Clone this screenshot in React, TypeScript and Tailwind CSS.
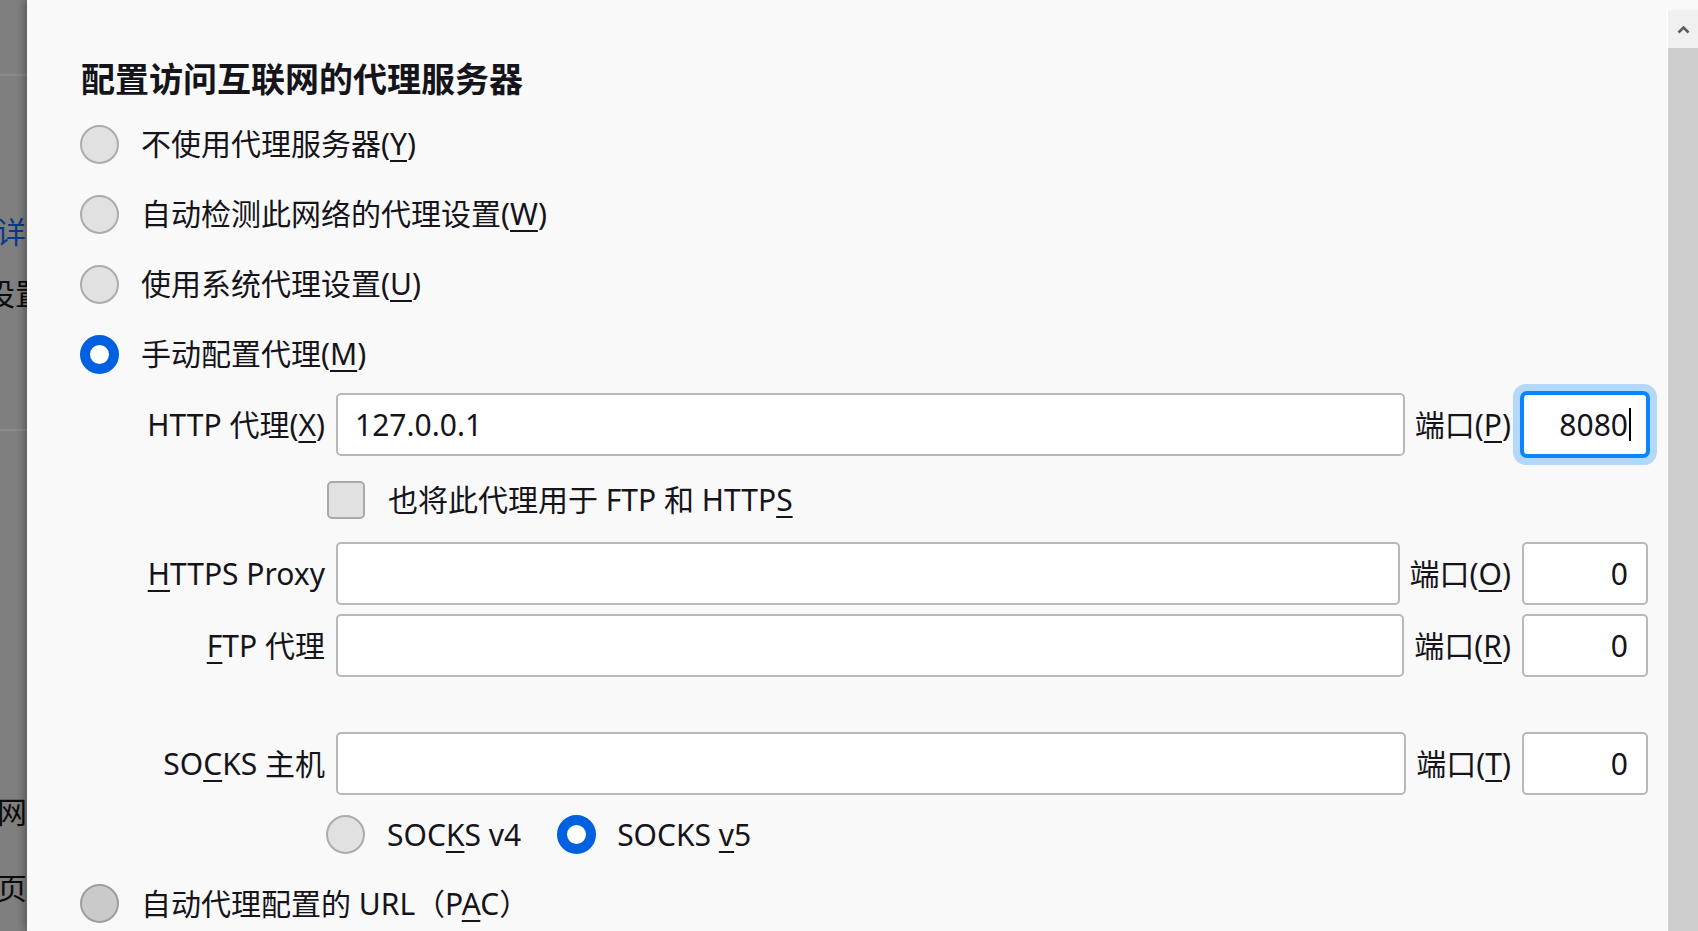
import React from "react";

function U({ children }: { children: React.ReactNode }) {
  return <span className="underline decoration-2 underline-offset-[5px]">{children}</span>;
}

function Radio({ checked = false, dark = false }: { checked?: boolean; dark?: boolean }) {
  if (checked) {
    return <span className="box-border block w-[39px] h-[39px] shrink-0 rounded-full border-[10px] border-[#0061e0] bg-white" />;
  }
  if (dark) {
    return <span className="box-border block w-[39px] h-[39px] shrink-0 rounded-full border-2 border-[#9e9e9e] bg-[#cacaca]" />;
  }
  return <span className="box-border block w-[39px] h-[39px] shrink-0 rounded-full border-2 border-[#acacac] bg-[#e1e1e1]" />;
}

function RadioRow({ checked = false, children }: { checked?: boolean; children: React.ReactNode }) {
  return (
    <div className="flex items-center h-[70px]">
      <Radio checked={checked} />
      <span className="ml-[22px] leading-none">{children}</span>
    </div>
  );
}

function PortBox({ value, focused = false }: { value: string; focused?: boolean }) {
  if (focused) {
    return (
      <div className="ml-[11px] box-border w-[126px] h-[63px] shrink-0 rounded-[5px] border-2 border-[#0b84ff] bg-white shadow-[0_0_0_2px_#0b84ff,0_0_0_9px_#b4d7fc] flex items-center justify-end pr-[18px]">
        <span className="leading-none">{value}</span>
        <span className="block w-[2px] h-[33px] bg-black ml-[1px] -mr-[3px]" />
      </div>
    );
  }
  return (
    <div className="ml-[11px] box-border w-[126px] h-[63px] shrink-0 rounded-[5px] border-2 border-[#b8b8b8] bg-white flex items-center justify-end pr-[18px]">
      <span className="leading-none">{value}</span>
    </div>
  );
}

function ProxyRow({
  label,
  value,
  port,
  portValue,
  focused = false,
  className,
}: {
  label: React.ReactNode;
  value?: string;
  port: React.ReactNode;
  portValue: string;
  focused?: boolean;
  className: string;
}) {
  return (
    <div className={"flex items-center h-[63px] " + className}>
      <div className="w-[245px] shrink-0 text-right leading-none whitespace-nowrap">{label}</div>
      <div className="ml-[11px] flex-1 box-border h-[63px] rounded-[5px] border-2 border-[#b8b8b8] bg-white flex items-center pl-[17px]">
        <span className="leading-none">{value}</span>
      </div>
      <div className="ml-[10px] leading-none whitespace-nowrap">{port}</div>
      <PortBox value={portValue} focused={focused} />
    </div>
  );
}

export default function App() {
  return (
    <div className="flex w-[1698px] h-[931px] overflow-hidden text-[30px] text-[#15141a] font-['Noto_Sans','Noto_Sans_CJK_SC',sans-serif]">
      {/* background page, dimmed behind the dialog */}
      <div className="w-[27px] shrink-0 bg-[#7f7f7f] overflow-hidden flex flex-col text-[30px] leading-none text-[#0c0c0c]">
        <div className="h-[74px] shrink-0" />
        <div className="h-[2px] shrink-0 bg-[#8b8b8b]" />
        <div className="mt-[141px] ml-[-4px] whitespace-nowrap text-[#0a3a86]">详细</div>
        <div className="mt-[32px] ml-[-15px] whitespace-nowrap">设置</div>
        <div className="mt-[120px] h-[2px] shrink-0 bg-[#8b8b8b]" />
        <div className="mt-[366px] ml-[-3px] whitespace-nowrap">网页</div>
        <div className="mt-[46px] ml-[-3px] whitespace-nowrap">页面</div>
      </div>

      {/* dialog */}
      <div className="flex-1 flex bg-[#f9f9f9] shadow-[-3px_0_8px_rgba(0,0,0,0.3)] z-10">
        <div className="flex-1 flex flex-col pl-[53px] pr-[19px]">
          <div className="mt-[62px] h-[34px] flex items-center pl-[1px] text-[34px] font-bold leading-none whitespace-nowrap">
            配置访问互联网的代理服务器
          </div>
          <div className="mt-[13px] flex flex-col">
            <RadioRow>
              不使用代理服务器(<U>Y</U>)
            </RadioRow>
            <RadioRow>
              自动检测此网络的代理设置(<U>W</U>)
            </RadioRow>
            <RadioRow>
              使用系统代理设置(<U>U</U>)
            </RadioRow>
            <RadioRow checked>
              手动配置代理(<U>M</U>)
            </RadioRow>
          </div>

          <ProxyRow
            className="mt-[4px]"
            label={<>HTTP 代理(<U>X</U>)</>}
            value="127.0.0.1"
            port={<>端口(<U>P</U>)</>}
            portValue="8080"
            focused
          />

          <div className="mt-[24px] h-[39px] flex items-center">
            <span className="ml-[247px] box-border block w-[38px] h-[38px] shrink-0 rounded-[5px] border-2 border-[#a9a9a9] bg-[#e1e1e1]" />
            <span className="ml-[23px] leading-none whitespace-nowrap">
              也将此代理用于 FTP 和 HTTP<U>S</U>
            </span>
          </div>

          <ProxyRow
            className="mt-[23px]"
            label={<><U>H</U>TTPS Proxy</>}
            port={<>端口(<U>O</U>)</>}
            portValue="0"
          />
          <ProxyRow
            className="mt-[9px]"
            label={<><U>F</U>TP 代理</>}
            port={<>端口(<U>R</U>)</>}
            portValue="0"
          />
          <ProxyRow
            className="mt-[55px]"
            label={<>SO<U>C</U>KS 主机</>}
            port={<>端口(<U>T</U>)</>}
            portValue="0"
          />

          <div className="mt-[20px] h-[39px] flex items-center">
            <span className="ml-[246px]">
              <Radio />
            </span>
            <span className="ml-[22px] leading-none whitespace-nowrap">
              SOC<U>K</U>S v4
            </span>
            <span className="ml-[36px]">
              <Radio checked />
            </span>
            <span className="ml-[21px] leading-none whitespace-nowrap">
              SOCKS <U>v</U>5
            </span>
          </div>

          <div className="mt-[30px] h-[39px] flex items-center">
            <Radio dark />
            <span className="ml-[22px] leading-none whitespace-nowrap">
              自动代理配置的 URL（P<U>A</U>C）
            </span>
          </div>
        </div>

        {/* scrollbar */}
        <div className="w-[31px] shrink-0 flex flex-col">
          <div className="h-[10px] shrink-0 bg-[#f9f9f9]" />
          <div className="flex-1 flex flex-col border-l border-white">
            <div className="h-[38px] shrink-0 bg-[#f0f0f0] flex items-center justify-center">
              <svg width="13" height="9" viewBox="0 0 13 9">
                <polyline points="1.5,7.5 6.5,2.5 11.5,7.5" fill="none" stroke="#5d5d5d" strokeWidth="2.6" />
              </svg>
            </div>
            <div className="flex-1 bg-[#cdcdcd]" />
          </div>
        </div>
      </div>
    </div>
  );
}
